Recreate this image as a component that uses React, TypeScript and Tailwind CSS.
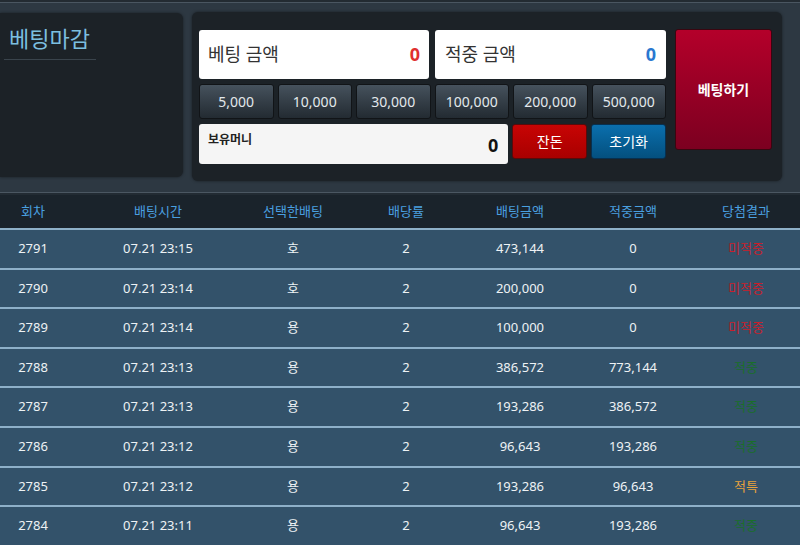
const rows = [
  { no: "2791", time: "07.21 23:15", pick: "호", odds: "2", bet: "473,144", win: "0", result: "미적중" },
  { no: "2790", time: "07.21 23:14", pick: "호", odds: "2", bet: "200,000", win: "0", result: "미적중" },
  { no: "2789", time: "07.21 23:14", pick: "용", odds: "2", bet: "100,000", win: "0", result: "미적중" },
  { no: "2788", time: "07.21 23:13", pick: "용", odds: "2", bet: "386,572", win: "773,144", result: "적중" },
  { no: "2787", time: "07.21 23:13", pick: "용", odds: "2", bet: "193,286", win: "386,572", result: "적중" },
  { no: "2786", time: "07.21 23:12", pick: "용", odds: "2", bet: "96,643", win: "193,286", result: "적중" },
  { no: "2785", time: "07.21 23:12", pick: "용", odds: "2", bet: "193,286", win: "96,643", result: "적특" },
  { no: "2784", time: "07.21 23:11", pick: "용", odds: "2", bet: "96,643", win: "193,286", result: "적중" },
];

const chips = ["5,000", "10,000", "30,000", "100,000", "200,000", "500,000"];

const resultColor: Record<string, string> = {
  미적중: "text-[#c8202c]",
  적중: "text-[#1a6e2a]",
  적특: "text-[#e8a23c]",
};

const cols = "grid grid-cols-[66px_184px_86px_140px_88px_138px_88px_10px] items-center text-center";

export default function App() {
  return (
    <div className="w-[800px] h-[545px] overflow-hidden bg-[#2d3842] text-[13px]" style={{ fontFamily: '"Noto Sans", "Noto Sans CJK KR", sans-serif' }}>
      {/* top strip */}
      <div className="h-[2px] bg-[#232b32]"></div>
      <div className="h-px bg-[#4a5661]"></div>

      {/* betting area */}
      <div className="flex gap-[9px] pt-[9px] h-[189px]">
        <div className="w-[183px] h-[164px] mt-px rounded-r-md bg-[#1c2227] shadow-[0_0_3px_rgba(0,0,0,0.5)]">
          <div className="ml-[4px] w-[92px] border-b border-[#3a444c] pt-[11px] pb-[6px] pl-[5px] text-[22px] leading-[29px] text-[#7cbfe0]">베팅마감</div>
        </div>

        <div className="w-[590px] h-[169px] rounded-md bg-[#1c2227] shadow-[0_0_3px_rgba(0,0,0,0.5)] flex pl-[7px] pt-[18px] gap-[9px]">
          <div className="w-[467px] flex flex-col gap-[5px]">
            <div className="flex gap-[6px]">
              <div className="w-[230px] h-[49px] rounded-[3px] bg-white flex items-center justify-between px-[9px]">
                <span className="text-[18px] text-[#333]">베팅 금액</span>
                <span className="text-[18px] font-bold text-[#e0302e]">0</span>
              </div>
              <div className="w-[231px] h-[49px] rounded-[3px] bg-white flex items-center justify-between px-[10px]">
                <span className="text-[18px] text-[#333]">적중 금액</span>
                <span className="text-[18px] font-bold text-[#2a78d0]">0</span>
              </div>
            </div>
            <div className="grid grid-cols-6 gap-[4px]">
              {chips.map((c) => (
                <div key={c} className="h-[35px] rounded-[3px] border border-[#111417] bg-gradient-to-b from-[#46525d] to-[#232b32] flex items-center justify-center text-[14px] text-[#e2e8ec]">
                  {c}
                </div>
              ))}
            </div>
            <div className="flex gap-[4px] items-start">
              <div className="w-[310px] h-[40px] rounded-[3px] bg-[#f5f5f5] flex items-center justify-between pl-[9px] pr-[10px]">
                <span className="text-[12px] font-bold text-[#222] -mt-[8px]">보유머니</span>
                <span className="text-[18px] font-bold text-[#111] mt-[2px]">0</span>
              </div>
              <div className="w-[75px] h-[35px] rounded-[3px] border border-[#5a0a0a] bg-gradient-to-b from-[#c80404] to-[#a80000] flex items-center justify-center text-[14px] text-white">잔돈</div>
              <div className="w-[75px] h-[35px] rounded-[3px] border border-[#073050] bg-gradient-to-b from-[#0b6fad] to-[#04507f] flex items-center justify-center text-[14px] text-white">초기화</div>
            </div>
          </div>
          <div className="w-[97px] h-[121px] -mt-[1px] rounded-[3px] border border-[#3a0610] bg-gradient-to-b from-[#b4002a] to-[#7c0020] flex items-center justify-center text-[14px] font-bold text-white">
            베팅하기
          </div>
        </div>
      </div>

      {/* divider */}
      <div className="h-px bg-[#4b5762]"></div>
      <div className="h-[2px] bg-[#222b33]"></div>

      {/* table */}
      <div className={`${cols} h-[33px] bg-[#1a232b] text-[#4aa0e0]`}>
        <div>회차</div>
        <div>배팅시간</div>
        <div>선택한배팅</div>
        <div>배당률</div>
        <div>배팅금액</div>
        <div>적중금액</div>
        <div>당첨결과</div>
      </div>
      {rows.map((r) => (
        <div key={r.no} className={`${cols} h-[39.6px] border-t-2 border-[#8eb0c8] bg-[#33526a] text-[#eef2f5]`}>
          <div>{r.no}</div>
          <div>{r.time}</div>
          <div>{r.pick}</div>
          <div>{r.odds}</div>
          <div>{r.bet}</div>
          <div>{r.win}</div>
          <div className={resultColor[r.result]}>{r.result}</div>
        </div>
      ))}
    </div>
  );
}
